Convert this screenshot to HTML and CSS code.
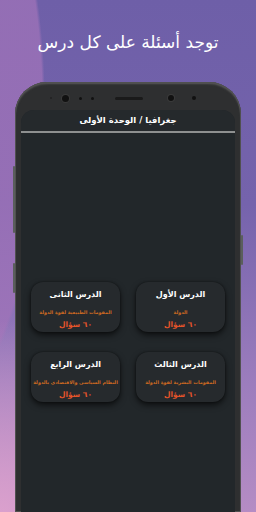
FILE: index.html
```html
<!DOCTYPE html>
<html lang="ar" dir="rtl">
<head>
  <meta charset="UTF-8" />
  <title>جغرافيا</title>
  <link rel="stylesheet" href="styles.css">
</head>
<body>
  <h1 class="headline">توجد أسئلة على كل درس</h1>

  <div class="phone">
    <span class="side-btn right"></span>
    <span class="side-btn left top"></span>
    <span class="side-btn left bottom"></span>

    <div class="sensors" dir="ltr">
      <span class="dot d1"></span>
      <span class="cam c1"></span>
      <span class="dot d2"></span>
      <span class="dot d3"></span>
      <span class="speaker"></span>
      <span class="cam c2"></span>
      <span class="dot d4"></span>
    </div>

    <div class="screen">
      <div class="appbar">جغرافيا / الوحدة الأولى</div>
      <div class="divider"></div>

      <div class="lessons">
        <div class="card">
          <div class="card-title">الدرس الأول</div>
          <div class="card-sub">الدولة</div>
          <div class="card-count">٦٠ سؤال</div>
        </div>
        <div class="card">
          <div class="card-title">الدرس الثانى</div>
          <div class="card-sub">المقومات الطبيعية لقوة الدولة</div>
          <div class="card-count">٦٠ سؤال</div>
        </div>
        <div class="card">
          <div class="card-title">الدرس الثالث</div>
          <div class="card-sub">المقومات البشرية لقوة الدولة</div>
          <div class="card-count">٦٠ سؤال</div>
        </div>
        <div class="card">
          <div class="card-title">الدرس الرابع</div>
          <div class="card-sub">النظام السياسى والاقتصادى بالدولة</div>
          <div class="card-count">٦٠ سؤال</div>
        </div>
      </div>
    </div>
  </div>
</body>
</html>
```

FILE: styles.css
```css
html, body { margin: 0; padding: 0; }
body {
  width: 256px; height: 512px; overflow: hidden;
  font-family: "DejaVu Sans", sans-serif;
  background:
    radial-gradient(ellipse 160px 200px at 0 520px, rgba(222,162,206,0.95), rgba(222,162,206,0) 100%),
    radial-gradient(ellipse 140px 330px at -95px 105px, rgba(160,115,185,0.75) 98%, rgba(160,115,185,0) 100%),
    linear-gradient(to bottom, #6e5fa8 0%, #7563ac 40%, #9c7dbd 75%, #b58cc4 100%);
}
.headline {
  margin: 0; padding-top: 30px; height: 82px; box-sizing: border-box;
  color: #fff; font-size: 17px; font-weight: normal; text-align: center; line-height: 24px;
}
.phone {
  position: relative; margin: 0 15px; height: 430px;
  background: #2e2f30; border-radius: 32px 32px 0 0;
  box-shadow: inset 0 0 0 1px #505050, inset 0 2px 2px #5a5a5a;
  padding: 0 6px;
}
.side-btn { position: absolute; width: 2px; background: #5a5e5c; border-radius: 1px; }
.side-btn.right { right: -2px; top: 153px; height: 30px; }
.side-btn.left { left: -2px; }
.side-btn.left.top { top: 84px; height: 67px; }
.side-btn.left.bottom { top: 181px; height: 30px; }

.sensors { height: 28px; display: flex; align-items: center; padding-top: 4px; box-sizing: border-box; }
.sensors span { display: block; background: #111; border-radius: 50%; flex: none; }
.dot { width: 3px; height: 3px; }
.d1 { width: 2px; height: 2px; margin-left: 29px; background: #222 !important; }
.cam { width: 7px; height: 7px; box-shadow: 0 0 0 1px #3a3a3a; }
.c1 { margin-left: 10px; }
.d2 { margin-left: 10px; }
.d3 { margin-left: 9px; }
.speaker { width: 28px !important; height: 3px !important; border-radius: 2px !important; margin-left: 21px; background: #1a1a1a !important; }
.c2 { width: 6px; height: 6px; margin-left: 25px; }
.d4 { width: 4px; height: 4px; margin-left: 18px; }

.screen {
  height: 402px; background: #22272a; border-radius: 13px 13px 0 0; overflow: hidden;
}
.appbar {
  height: 21px; line-height: 21px; text-align: center; color: #fff;
  font-size: 8.5px; font-weight: bold; background: #25292c;
}
.divider { height: 2px; background: #8e9090; }
.lessons {
  display: grid; grid-template-columns: 89px 89px; column-gap: 16px; row-gap: 20px;
  justify-content: center; margin-top: 149px;
}
.card {
  height: 50px; border-radius: 12px; background: #262a2d;
  box-shadow: 0 3px 6px rgba(0,0,0,0.65), 0 0 2px rgba(0,0,0,0.5);
  text-align: center; display: flex; flex-direction: column; align-items: center;
}
.card-title { color: #fff; font-size: 8px; font-weight: bold; margin-top: 7px; line-height: 12px; }
.card-sub { color: #d06a22; font-size: 4.8px; font-weight: bold; margin-top: 8px; line-height: 7px; white-space: nowrap; }
.card-count { color: #e4542a; font-size: 7.5px; font-weight: bold; margin-top: 4px; line-height: 10px; }
```
